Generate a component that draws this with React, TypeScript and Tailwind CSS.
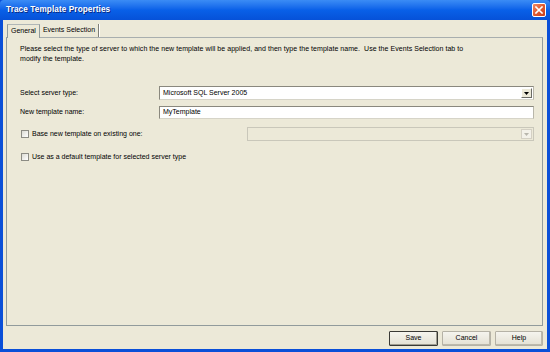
import React from "react";

const font = { fontFamily: '"Liberation Sans", Arial, sans-serif' };

function Checkbox() {
  return (
    <div className="w-[8px] h-[8px] border border-[#8c8c84] bg-gradient-to-br from-[#dcdcd4] to-white shrink-0" />
  );
}

function ArrowBtn({ disabled }: { disabled?: boolean }) {
  return (
    <div
      className={
        "w-[11px] h-[10px] flex items-center justify-center border " +
        (disabled
          ? "border-[#d4d0c4] bg-[#f3f1e9]"
          : "border-t-white border-l-white border-r-[#6b6b65] border-b-[#6b6b65] bg-[#ece9d8]")
      }
    >
      <svg width="5" height="3" viewBox="0 0 5 3">
        <path d="M0 0 H5 L2.5 3 Z" fill={disabled ? "#b8b6ac" : "#000"} />
      </svg>
    </div>
  );
}

function Button({ label, def }: { label: string; def?: boolean }) {
  return (
    <div
      className={
        "h-[15px] flex items-center justify-center text-[7px] text-black rounded-[1px] " +
        (def
          ? "border border-[#3a3a36] bg-gradient-to-b from-[#f5f4ee] to-[#e4e1d4] shadow-[inset_-1px_-1px_0_#a09d90]"
          : "border border-[#b5b2a6] bg-gradient-to-b from-[#f5f4ee] to-[#e4e1d4] shadow-[inset_-1px_-1px_0_#bcb9ac]")
      }
      style={{ width: label === "Help" ? 48 : 49 }}
    >
      {label}
    </div>
  );
}

const sunken =
  "border border-t-[#8a887e] border-l-[#8a887e] border-b-[#d6d4c8] border-r-[#b8b6aa]";

export default function App() {
  return (
    <div
      className="w-[550px] h-[352px] flex flex-col bg-[#0a4fd8] overflow-hidden"
      style={font}
    >
      {/* Title bar */}
      <div className="h-[20px] shrink-0 flex items-center justify-between pl-[6px] pr-[4px] bg-gradient-to-b from-[#3b8cf5] via-[#0960e8] to-[#0651d8] rounded-t-[4px]">
        <span className="text-white font-bold text-[8.2px] tracking-[0.1px] [text-shadow:1px_1px_0_#0a2a80]">
          Trace Template Properties
        </span>
        <div className="w-[14px] h-[14px] rounded-[2px] border border-white bg-gradient-to-br from-[#f08a66] via-[#e05a30] to-[#c8401c] flex items-center justify-center">
          <svg width="8" height="8" viewBox="0 0 8 8">
            <path d="M1 1 L7 7 M7 1 L1 7" stroke="#fff" strokeWidth="1.6" strokeLinecap="square" />
          </svg>
        </div>
      </div>

      {/* Body */}
      <div className="flex-1 mx-[3px] mb-[3px] bg-[#ece9d8] flex flex-col pl-[3px] pr-[4px] pt-[3px] text-[7px] text-black">
        {/* Tabs */}
        <div className="flex items-end h-[14px] pl-[1px]">
          <div className="h-[14px] px-[3px] flex items-center border border-b-0 border-[#919b9c] border-t-[#b0b6b6] bg-[#ece9d8] relative z-10 -mb-px pb-px">
            General
          </div>
          <div className="h-[13px] px-[3px] flex items-center border-r border-[#7f7f78] shadow-[1px_0_0_#fff]">
            Events Selection
          </div>
        </div>

        {/* Panel */}
        <div className="h-[289px] border border-[#919b9c] border-t-[#a8aeae] bg-[#ece9d8] pl-[13px] pr-[8px] pt-[6px] flex flex-col">
          <div className="leading-[10px] tracking-[0.05px]">
            Please select the type of server to which the new template will be applied, and then type the template name.&nbsp; Use the Events Selection tab to
            <br />
            modify the template.
          </div>

          <div className="mt-[22px] flex items-center h-[14px]">
            <div className="w-[139px]">Select server type:</div>
            <div className={"flex-1 h-[14px] bg-white flex items-center justify-between pl-[3px] pr-[1px] " + sunken}>
              <span>Microsoft SQL Server 2005</span>
              <ArrowBtn />
            </div>
          </div>

          <div className="mt-[6px] flex items-center h-[13px]">
            <div className="w-[139px]">New template name:</div>
            <div className={"flex-1 h-[13px] bg-white flex items-center pl-[3px] " + sunken}>
              MyTemplate
            </div>
          </div>

          <div className="mt-[8px] flex items-center h-[14px]">
            <div className="w-[227px] flex items-center gap-[3px] pl-[1px]">
              <Checkbox />
              <span>Base new template on existing one:</span>
            </div>
            <div className="flex-1 h-[14px] bg-[#ece9d8] border border-[#c9c7ba] flex items-center justify-end pr-[1px]">
              <ArrowBtn disabled />
            </div>
          </div>

          <div className="mt-[11px] flex items-center h-[10px] gap-[3px] pl-[1px]">
            <Checkbox />
            <span>Use as a default template for selected server type</span>
          </div>
        </div>

        {/* Buttons */}
        <div className="flex justify-end gap-[4px] mt-[5px]">
          <Button label="Save" def />
          <Button label="Cancel" />
          <Button label="Help" />
        </div>
      </div>
    </div>
  );
}
